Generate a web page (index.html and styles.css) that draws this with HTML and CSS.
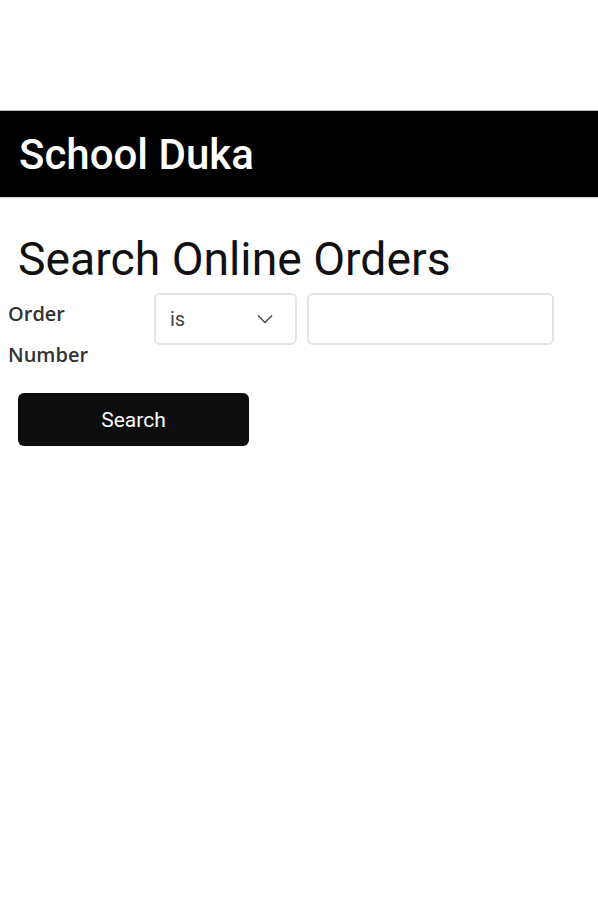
FILE: index.html
```html
<!DOCTYPE html>
<html lang="en">
<head>
  <meta charset="UTF-8">
  <title>School Duka - Search Online Orders</title>
  <link rel="stylesheet" href="styles.css">
</head>
<body>
  <div id="page">
    <div id="topbar">
      <h1 class="brand">School Duka</h1>
    </div>
    <form id="searchForm" method="GET">
      <h2 class="title">Search Online Orders</h2>
      <div class="row">
        <label for="orderNumber" class="label">Order Number</label>
        <div class="select">
          <span>is</span>
          <svg width="16" height="10" viewBox="0 0 16 10"><path d="M1 1.5 L8 8.5 L15 1.5" fill="none" stroke="#444" stroke-width="1.4"/></svg>
        </div>
        <input type="text" id="orderNumber" name="orderNumber" class="field">
      </div>
      <button type="submit" class="btn">Search</button>
    </form>
  </div>
</body>
</html>
```

FILE: styles.css
```css
body {
  margin: 0;
  background: #fff;
  font-family: Roboto, "Liberation Sans", sans-serif;
}
#page {
  padding-top: 110px;
}
#topbar {
  background: #000;
  border-top: 1px solid #bbb;
  border-bottom: 1px solid #ccc;
  height: 86px;
  display: flex;
  align-items: center;
  padding-left: 19px;
}
.brand {
  margin: 0;
  color: #fff;
  font-size: 42px;
  font-weight: 500;
}
#searchForm {
  padding: 36px 0 0 8px;
}
.title {
  margin: 0 0 9px 10px;
  font-size: 46.3px;
  font-weight: 400;
  color: #111;
  line-height: 50px;
}
.row {
  display: flex;
  align-items: flex-start;
}
.label {
  width: 120px;
  margin: 0 26px 0 0;
  font-family: "Open Sans", "Noto Sans", sans-serif;
  font-size: 20px;
  font-weight: 600;
  color: #333;
  line-height: 41px;
}
.select {
  width: 143px;
  height: 52px;
  box-sizing: border-box;
  border: 2px solid #e4e4e4;
  border-radius: 6px;
  display: flex;
  align-items: center;
  justify-content: space-between;
  padding: 0 22px 0 14px;
  font-size: 20px;
  color: #444;
}
.field {
  width: 247px;
  height: 52px;
  box-sizing: border-box;
  margin-left: 10px;
  border: 2px solid #e4e4e4;
  border-radius: 6px;
}
.btn {
  display: block;
  margin: 18px 0 0 10px;
  width: 231px;
  height: 53px;
  background: #0d0d0d;
  color: #fff;
  border: 0;
  border-radius: 6px;
  font-family: Roboto, "Liberation Sans", sans-serif;
  font-size: 21px;
}
```
